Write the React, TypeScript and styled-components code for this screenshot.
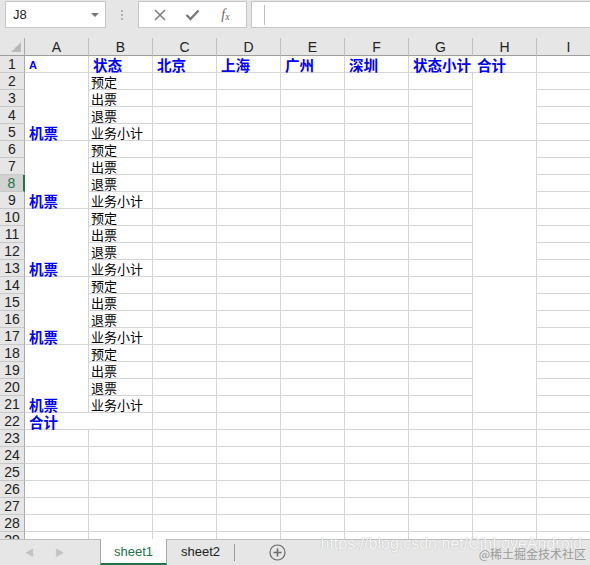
import * as React from 'react';
import styled, { createGlobalStyle } from 'styled-components';

const GlobalStyle = createGlobalStyle`
  html, body {
    margin: 0;
    padding: 0;
    background: #ffffff;
    overflow: hidden;
  }
  * {
    box-sizing: border-box;
  }
`;

const COLS = ['A', 'B', 'C', 'D', 'E', 'F', 'G', 'H', 'I'];
const HEADS = ['北京', '上海', '广州', '深圳', '状态小计', '合计'];
const STATES = ['预定', '出票', '退票', '业务小计'];

const Window = styled.div`
  width: 590px;
  height: 565px;
  display: flex;
  flex-direction: column;
  background: #e6e6e6;
  font-family: "Liberation Sans", "Noto Sans CJK SC", sans-serif;
  overflow: hidden;
`;

const FormulaBar = styled.div`
  height: 38px;
  display: flex;
  align-items: flex-start;
  padding: 1px 0 0 5px;
`;

const NameBox = styled.div`
  width: 101px;
  height: 27px;
  background: #fff;
  border: 1px solid #c6c6c6;
  display: flex;
  align-items: center;
  justify-content: space-between;
  padding: 0 6px 0 7px;
  font-size: 13px;
  color: #222;
`;

const Caret = styled.span`
  width: 0;
  height: 0;
  border-left: 4px solid transparent;
  border-right: 4px solid transparent;
  border-top: 4px solid #777;
`;

const Grip = styled.div`
  width: 32px;
  height: 27px;
  display: flex;
  flex-direction: column;
  align-items: center;
  justify-content: center;
  gap: 2px;
  & > span {
    width: 2px;
    height: 2px;
    background: #b0b0b0;
  }
`;

const ButtonGroup = styled.div`
  width: 109px;
  height: 27px;
  background: #fff;
  border: 1px solid #c6c6c6;
  display: flex;
  align-items: center;
  justify-content: space-around;
  padding: 0 4px;
`;

const IconButton = styled.span`
  width: 24px;
  display: flex;
  justify-content: center;
  align-items: center;
  color: #777;
`;

const Fx = styled.span`
  font-family: "Liberation Serif", serif;
  font-style: italic;
  font-size: 14px;
  color: #666;
  & > sub {
    font-size: 10px;
    vertical-align: -1px;
  }
`;

const Input = styled.div`
  flex: 1;
  height: 27px;
  margin-left: 4px;
  background: #fff;
  border: 1px solid #c6c6c6;
  border-right: none;
  display: flex;
  align-items: center;
  padding-left: 12px;
  & > span {
    width: 1px;
    height: 20px;
    background: #c0c0c0;
  }
`;

const Sheet = styled.div`
  height: 501px;
  overflow: hidden;
  background: #fff;
`;

const Grid = styled.div`
  display: grid;
  grid-template-columns: 25px repeat(9, 64px);
  grid-template-rows: 18px repeat(29, 17px);
  width: 601px;
`;

const Corner = styled.div`
  background: #e6e6e6;
  border-right: 1px solid #ababab;
  border-bottom: 1px solid #9e9e9e;
  display: flex;
  align-items: flex-end;
  justify-content: flex-end;
  padding: 0 3px 3px 0;
  & > span {
    width: 0;
    height: 0;
    border-left: 10px solid transparent;
    border-bottom: 10px solid #b9b9b9;
  }
`;

const ColHead = styled.div`
  background: #e6e6e6;
  border-right: 1px solid #c0c0c0;
  border-bottom: 1px solid #9e9e9e;
  font-size: 14px;
  line-height: 16px;
  color: #222;
  display: flex;
  align-items: center;
  justify-content: center;
`;

const RowHead = styled.div<{ $active?: boolean }>`
  background: ${p => (p.$active ? '#d2d2d2' : '#e6e6e6')};
  color: ${p => (p.$active ? '#217346' : '#222')};
  border-right: ${p => (p.$active ? '2px solid #217346' : '1px solid #ababab')};
  border-bottom: 1px solid #c8c8c8;
  font-size: 14px;
  line-height: 16px;
  display: flex;
  align-items: center;
  justify-content: center;
`;

const Cell = styled.div<{ $span?: number; $cols?: number; $bold?: boolean; $open?: boolean }>`
  grid-row: span ${p => p.$span || 1};
  grid-column: span ${p => p.$cols || 1};
  border-right: ${p => (p.$open ? 'none' : '1px solid #d4d4d4')};
  border-bottom: 1px solid #d4d4d4;
  display: flex;
  align-items: flex-end;
  padding: 0 0 0 ${p => (p.$bold ? 4 : 2)}px;
  white-space: nowrap;
  font-family: "Noto Sans CJK SC", sans-serif;
  font-size: ${p => (p.$bold ? 14.5 : 13)}px;
  font-weight: ${p => (p.$bold ? 700 : 400)};
  line-height: 15px;
  color: ${p => (p.$bold ? '#0000ff' : '#000')};
`;

const SmallA = styled.span`
  font-family: "Liberation Sans", sans-serif;
  font-size: 11px;
  line-height: 14px;
`;

const TabBar = styled.div`
  flex: 1;
  display: flex;
  align-items: stretch;
  border-top: 1px solid #bfbfbf;
  background: #e6e6e6;
  position: relative;
`;

const Nav = styled.div`
  width: 100px;
  display: flex;
  align-items: center;
  padding-left: 25px;
  gap: 21px;
  color: #c2c2c2;
  font-size: 9px;
`;

const Tab = styled.div<{ $active?: boolean }>`
  width: 67px;
  display: flex;
  justify-content: center;
  align-items: center;
  font-size: 13px;
  margin-top: -1px;
  background: ${p => (p.$active ? '#fff' : 'transparent')};
  color: ${p => (p.$active ? '#217346' : '#222')};
  border-left: ${p => (p.$active ? '1px solid #a8a8a8' : 'none')};
  border-right: ${p => (p.$active ? '1px solid #a8a8a8' : 'none')};
  border-bottom: ${p => (p.$active ? '2px solid #217346' : '2px solid transparent')};
`;

const Divider = styled.div`
  width: 1px;
  background: #9a9a9a;
  margin: 4px 0 4px 0;
`;

const AddButton = styled.div`
  width: 84px;
  display: flex;
  align-items: center;
  justify-content: center;
  color: #6b6b6b;
`;

const Watermark = styled.div`
  position: absolute;
  right: 8px;
  top: -5px;
  font-size: 16px;
  color: rgba(255, 255, 255, 0.9);
  text-shadow: 0 0 1px rgba(110, 110, 110, 0.5);
`;

const Stamp = styled.div`
  position: absolute;
  right: 4px;
  bottom: 3px;
  font-family: "Noto Sans CJK SC", sans-serif;
  font-size: 12px;
  color: #9a9a9a;
`;

function buildCells() {
  const out: React.ReactNode[] = [];
  out.push(<Corner key="corner"><span /></Corner>);
  COLS.forEach(c => out.push(<ColHead key={'h' + c}>{c}</ColHead>));

  for (let r = 1; r <= 29; r++) {
    out.push(<RowHead key={'r' + r} $active={r === 8}>{r}</RowHead>);
    if (r === 1) {
      out.push(<Cell key="a1" $bold><SmallA>A</SmallA></Cell>);
      out.push(<Cell key="b1" $bold>状态</Cell>);
      HEADS.forEach((h, i) => (
        out.push(<Cell key={'t' + i} $bold $open={h === '状态小计'}>{h}</Cell>)
      ));
      out.push(<Cell key="i1" />);
    } else if (r <= 21) {
      const k = (r - 2) % 4;
      if (k === 0) out.push(<Cell key={'a' + r} $span={4} $bold>机票</Cell>);
      out.push(<Cell key={'b' + r}>{STATES[k]}</Cell>);
      for (let c = 0; c < 5; c++) out.push(<Cell key={r + '-' + c} />);
      if (k === 0) out.push(<Cell key={'h' + r} $span={4} />);
      out.push(<Cell key={'i' + r} />);
    } else if (r === 22) {
      out.push(<Cell key="a22" $cols={2} $bold>合计</Cell>);
      for (let c = 0; c < 7; c++) out.push(<Cell key={'22-' + c} />);
    } else {
      for (let c = 0; c < 9; c++) out.push(<Cell key={r + '-' + c} />);
    }
  }
  return out;
}

const App = () => {
  return (
    <Window>
      <GlobalStyle />
      <FormulaBar>
        <NameBox>
          J8
          <Caret />
        </NameBox>
        <Grip><span /><span /><span /></Grip>
        <ButtonGroup>
          <IconButton>
            <svg width="12" height="12" viewBox="0 0 12 12">
              <path d="M1 1 L11 11 M11 1 L1 11" stroke="#7a7a7a" strokeWidth="1.5" fill="none" />
            </svg>
          </IconButton>
          <IconButton>
            <svg width="15" height="12" viewBox="0 0 15 12">
              <path d="M1.5 6 L5.5 10 L13.5 1.5" stroke="#7a7a7a" strokeWidth="2.4" fill="none" />
            </svg>
          </IconButton>
          <IconButton>
            <Fx>f<sub>x</sub></Fx>
          </IconButton>
        </ButtonGroup>
        <Input><span /></Input>
      </FormulaBar>
      <Sheet>
        <Grid>{buildCells()}</Grid>
      </Sheet>
      <TabBar>
        <Nav><span>◀</span><span>▶</span></Nav>
        <Tab $active>sheet1</Tab>
        <Tab>sheet2</Tab>
        <Divider />
        <AddButton>
          <svg width="17" height="17" viewBox="0 0 17 17">
            <circle cx="8.5" cy="8.5" r="7.5" stroke="#6b6b6b" strokeWidth="1.2" fill="none" />
            <path d="M8.5 4.5 V12.5 M4.5 8.5 H12.5" stroke="#6b6b6b" strokeWidth="1.6" />
          </svg>
        </AddButton>
        <Watermark>https://blog.csdn.net/CjhLoveAndroid</Watermark>
        <Stamp>@稀土掘金技术社区</Stamp>
      </TabBar>
    </Window>
  );
};

export default App;
